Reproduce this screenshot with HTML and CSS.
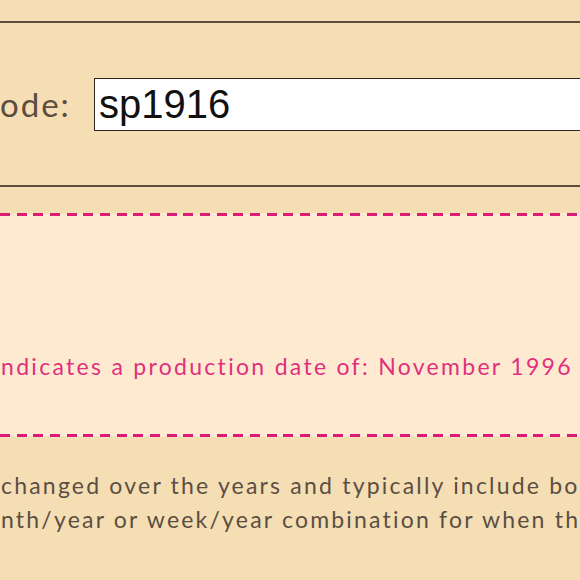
FILE: index.html
```html
<!DOCTYPE html>
<html lang="en">
<head>
<meta charset="utf-8">
<title>Date code lookup</title>
<link rel="stylesheet" href="styles.css">
</head>
<body>
<div class="page">
  <form class="code-row">
    <label class="code-label" for="code">ode:</label>
    <input class="code-input" id="code" type="text" value="sp1916">
  </form>
  <div class="result">
    <p class="result-text">ndicates a production date of: November 1996</p>
  </div>
  <p class="info">changed over the years and typically include bo<br>nth/year or week/year combination for when th</p>
</div>
</body>
</html>
```
FILE: styles.css
```css
html, body {
  margin: 0;
  padding: 0;
}
body {
  background: #f5deb3;
  overflow: hidden;
  width: 580px;
  height: 580px;
}
.page {
  padding-top: 21px;
  font-family: Lato, "Open Sans", sans-serif;
}
.code-row {
  margin: 0;
  height: 162px;
  border-top: 2px solid #5e4d3b;
  border-bottom: 2px solid #5e4d3b;
  display: flex;
  align-items: center;
}
.code-label {
  flex: none;
  width: 67px;
  margin-right: 27px;
  text-align: right;
  white-space: nowrap;
  font-size: 33px;
  letter-spacing: 2px;
  color: #5a4c40;
}
.code-input {
  flex: none;
  box-sizing: border-box;
  width: 560px;
  height: 53px;
  margin: 0;
  padding: 0 0 0 4px;
  border: 1px solid #2b2620;
  background: #fff;
  font-family: "Liberation Sans", Arial, sans-serif;
  font-size: 40px;
  color: #111;
  outline: none;
}
.result {
  margin-top: 26px;
  box-sizing: border-box;
  height: 224px;
  display: flex;
  align-items: flex-end;
  padding-bottom: 56px;
  background:
    repeating-linear-gradient(90deg, #d91c74 0 10px, transparent 10px 16.67px) left top / 100% 3px no-repeat,
    repeating-linear-gradient(90deg, #d91c74 0 10px, transparent 10px 16.67px) left bottom / 100% 3px no-repeat,
    #fdead1;
}
.result-text {
  margin: 0 0 0 1px;
  font-size: 23px;
  line-height: 30px;
  letter-spacing: 2.3px;
  white-space: nowrap;
  color: #e0307d;
}
.info {
  margin: 31px 0 0 1px;
  font-size: 23px;
  line-height: 34px;
  letter-spacing: 2.2px;
  white-space: nowrap;
  color: #5a4e44;
}
```
